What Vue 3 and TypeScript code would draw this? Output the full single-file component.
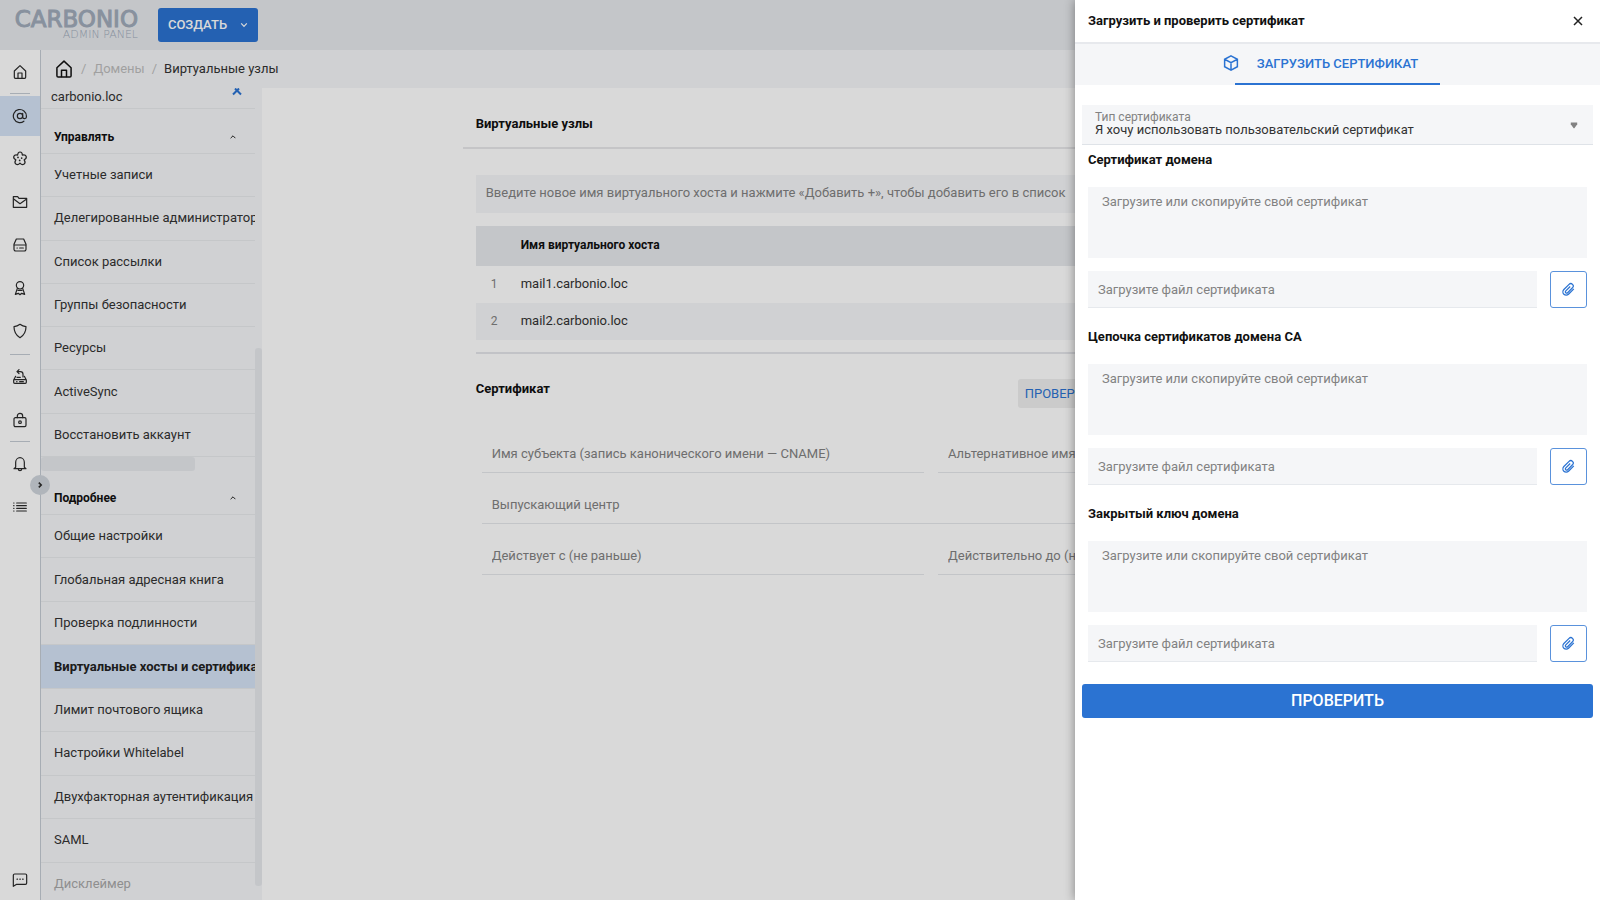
<script setup lang="ts">
import { ref } from 'vue'

interface NavItem {
  name: string
  label: string
  active?: boolean
}

interface MenuItem {
  label: string
  active?: boolean
  muted?: boolean
}

const icons: Record<string, string> = {
  home: '<path d="M3.500 10.500 12 2.500l8.500 8V20a1.500 1.500 0 0 1-1.500 1.500H5A1.500 1.500 0 0 1 3.500 20z"/><path d="M9 21v-7.500h6V21"/>',
  at: '<circle cx="12" cy="12" r="4"/><path d="M16 8v5.500a2.800 2.800 0 0 0 5.600-.5v-1a9.800 9.800 0 1 0-3.800 7.800"/>',
  cluster:
    '<path d="M8.500 6.100C8.500 3.400 10 1.500 12 1.500s3.500 1.900 3.500 4.600c2.600-.8 4.900-.1 5.700 1.900.8 2.100-.6 4.200-3 5.200 1.600 2.200 1.700 4.800 0 6.200-1.800 1.400-4.400.8-6.200-1.300-1.800 2.100-4.400 2.700-6.200 1.300-1.700-1.400-1.600-4 0-6.200-2.400-1-3.800-3.100-3-5.200.8-2 3.100-2.700 5.700-1.900z"/><path d="M9 9.500v.1M14.500 10.500v.1M11.500 14v.1" stroke-width="2.600"/>',
  mail: '<path d="M2 4h6.500l2 2.500H22V20H2z"/><path d="m2.500 7.500 9.500 7 9.500-6.500"/>',
  server:
    '<path d="M6.500 3h11l3.500 8v7.500a2.500 2.500 0 0 1-2.500 2.500h-13A2.500 2.500 0 0 1 3 18.500V11z"/><path d="M3.500 12h17M7.500 16.500h.5M11.500 16.500H17"/>',
  award:
    '<circle cx="12" cy="8" r="5.500"/><path d="M8 12.500 5 21.500l4.500-1.500L12 22l2.500-2 4.500 1.500-3-9M9 15.500h6"/>',
  shield: '<path d="M12 2c2.700 2 5.500 3.200 9 3.500 0 7.500-2.500 12.500-9 16.500C5.500 18 3 13 3 5.500 6.500 5.200 9.300 4 12 2z"/>',
  backup:
    '<path d="M5.500 11 2.500 16.500V20A1.500 1.500 0 0 0 4 21.500h16a1.500 1.500 0 0 0 1.500-1.500v-3.500l-3-5.500M3 16h18M7 19h.5M11.500 19H17M7.500 12.500h5"/><path d="M8 4h4.500a4 4 0 0 1 4 4v4M10.500 1 7.500 4l3 3"/>',
  lock: '<rect x="3" y="8.500" width="18" height="13.500" rx="2"/><path d="M8 8.500V6a4 4 0 0 1 8 0v2.500"/><circle cx="12" cy="15.200" r="2"/>',
  bell: '<path d="M5.500 17V9.500a6.500 7 0 0 1 13 0V17l2.500 2H3z"/><path d="M9.500 19.500a2.500 2.500 0 0 0 5 0"/>',
  list: '<path d="M7 6h14.500M7 10h14.500M7 14h14.500M7 18h14.500M2.500 6h.5M2.500 10h.5M2.500 14h.5M2.500 18h.5"/>',
  chat: '<path d="M4 3h16a2 2 0 0 1 2 2v11.500a2 2 0 0 1-2 2H7L2 21.500V5a2 2 0 0 1 2-2z"/><path d="M7.500 10.800h.8M11.700 10.800h.8M15.900 10.800h.8"/>',
}

const railGroups: NavItem[][] = [
  [{ name: 'home', label: 'Главная' }],
  [
    { name: 'at', label: 'Домены', active: true },
    { name: 'cluster', label: 'Серверы' },
    { name: 'mail', label: 'Хранилище' },
    { name: 'server', label: 'Почтовые серверы' },
    { name: 'award', label: 'Подписка' },
    { name: 'shield', label: 'Конфиденциальность' },
  ],
  [
    { name: 'backup', label: 'Резервные копии' },
    { name: 'lock', label: 'Безопасность' },
  ],
  [
    { name: 'bell', label: 'Уведомления' },
    { name: 'list', label: 'Операции' },
  ],
]

const manageItems: MenuItem[] = [
  { label: 'Учетные записи' },
  { label: 'Делегированные администраторы' },
  { label: 'Список рассылки' },
  { label: 'Группы безопасности' },
  { label: 'Ресурсы' },
  { label: 'ActiveSync' },
  { label: 'Восстановить аккаунт' },
]

const detailItems: MenuItem[] = [
  { label: 'Общие настройки' },
  { label: 'Глобальная адресная книга' },
  { label: 'Проверка подлинности' },
  { label: 'Виртуальные хосты и сертификаты', active: true },
  { label: 'Лимит почтового ящика' },
  { label: 'Настройки Whitelabel' },
  { label: 'Двухфакторная аутентификация' },
  { label: 'SAML' },
  { label: 'Дисклеймер', muted: true },
]

const hosts = ['mail1.carbonio.loc', 'mail2.carbonio.loc']

const certFields = [
  { id: 'subject', label: 'Имя субъекта (запись канонического имени — CNAME)' },
  { id: 'san', label: 'Альтернативное имя субъекта' },
  { id: 'issuer', label: 'Выпускающий центр', wide: true },
  { id: 'from', label: 'Действует с (не раньше)' },
  { id: 'until', label: 'Действительно до (не позже)' },
]

const uploads = ref([
  { id: 'domain', title: 'Сертификат домена', body: '', file: '' },
  { id: 'chain', title: 'Цепочка сертификатов домена CA', body: '', file: '' },
  { id: 'key', title: 'Закрытый ключ домена', body: '', file: '' },
])

const certType = ref('custom')
</script>

<template>
  <div class="app">
    <header class="topbar">
      <div class="logo">
        <span class="logo-name">CARBONIO</span>
        <span class="logo-sub">ADMIN PANEL</span>
      </div>
      <button class="create" type="button">
        СОЗДАТЬ
        <svg viewBox="0 0 10 10" width="8" height="8"><path d="M1.500 3 5 6.800 8.500 3" /></svg>
      </button>
    </header>

    <div class="body">
      <nav class="rail" aria-label="Разделы">
        <ul v-for="(group, g) in railGroups" :key="g" class="rail-group">
          <li v-for="item in group" :key="item.name">
            <button class="rail-item" :class="{ active: item.active }" type="button" :aria-label="item.label">
              <svg class="icon" viewBox="0 0 24 24" width="16" height="16" v-html="icons[item.name]"></svg>
            </button>
          </li>
        </ul>
        <button class="rail-item rail-last" type="button" aria-label="Обратная связь">
          <svg class="icon" viewBox="0 0 24 24" width="16" height="16" v-html="icons.chat"></svg>
        </button>
        <button class="expander" type="button" aria-label="Развернуть">
          <svg viewBox="0 0 10 10" width="8" height="8"><path d="M3.500 2 6.500 5 3.500 8" /></svg>
        </button>
      </nav>

      <div class="workspace">
        <div class="crumbs">
          <svg class="icon" viewBox="0 0 24 24" width="20" height="20" v-html="icons.home"></svg>
          <span class="sep">/</span>
          <a class="crumb" href="#domains">Домены</a>
          <span class="sep">/</span>
          <span>Виртуальные узлы</span>
        </div>

        <div class="columns">
          <aside class="side">
            <div class="side-list">
              <div class="domain">
                <span>carbonio.loc</span>
                <svg viewBox="0 0 10 8" width="10" height="8"><path d="M1 6.500 5 2.500 9 6.500M3 .5 5 2.500 7 .5" /></svg>
              </div>
              <button class="section first" type="button">
                Управлять
                <svg viewBox="0 0 10 10" width="6" height="6"><path d="M1 7 5 3l4 4" /></svg>
              </button>
              <ul class="menu manage">
                <li v-for="item in manageItems" :key="item.label">
                  <a href="#menu">{{ item.label }}</a>
                </li>
              </ul>
              <div class="hscroll"></div>
              <button class="section second" type="button">
                Подробнее
                <svg viewBox="0 0 10 10" width="6" height="6"><path d="M1 7 5 3l4 4" /></svg>
              </button>
              <ul class="menu detail">
                <li v-for="item in detailItems" :key="item.label" :class="{ active: item.active, muted: item.muted }">
                  <a href="#menu">{{ item.label }}</a>
                </li>
              </ul>
            </div>
            <div class="vscroll"><span class="thumb"></span></div>
          </aside>

          <main class="main">
            <div class="panel">
              <h1 class="panel-title">Виртуальные узлы</h1>
              <div class="panel-body">
                <input
                  class="host-input"
                  type="text"
                  aria-label="Имя виртуального хоста"
                  placeholder="Введите новое имя виртуального хоста и нажмите «Добавить +», чтобы добавить его в список"
                />
                <table class="hosts">
                  <thead>
                    <tr>
                      <th class="num"></th>
                      <th>Имя виртуального хоста</th>
                    </tr>
                  </thead>
                  <tbody>
                    <tr v-for="(host, i) in hosts" :key="host">
                      <td class="num">{{ i + 1 }}</td>
                      <td>{{ host }}</td>
                    </tr>
                  </tbody>
                </table>
                <section class="cert">
                  <div class="cert-head">
                    <h2>Сертификат</h2>
                    <button class="verify" type="button">ПРОВЕРИТЬ</button>
                  </div>
                  <div class="cert-grid">
                    <input
                      v-for="field in certFields"
                      :key="field.id"
                      class="cert-field"
                      :class="{ wide: field.wide }"
                      type="text"
                      readonly
                      :aria-label="field.label"
                      :placeholder="field.label"
                    />
                  </div>
                </section>
              </div>
            </div>
          </main>
        </div>
      </div>
    </div>

    <div class="shade"></div>

    <section class="drawer" role="dialog" aria-labelledby="drawer-title">
      <div class="drawer-head">
        <h2 id="drawer-title">Загрузить и проверить сертификат</h2>
        <button class="close" type="button" aria-label="Закрыть">
          <svg viewBox="0 0 10 10" width="10" height="10"><path d="M1 1l8 8M9 1 1 9" /></svg>
        </button>
      </div>
      <div class="tabs">
        <button class="tab" type="button">
          <svg viewBox="0 0 24 24" width="18" height="18">
            <path d="M12 2.500 20.500 7v10L12 21.500 3.500 17V7zM3.500 7l8.500 4.500L20.500 7M12 11.500v10" />
          </svg>
          ЗАГРУЗИТЬ СЕРТИФИКАТ
        </button>
      </div>
      <form class="drawer-body" @submit.prevent>
        <div class="select-box">
          <label for="cert-type">Тип сертификата</label>
          <select id="cert-type" v-model="certType">
            <option value="custom">Я хочу использовать пользовательский сертификат</option>
          </select>
          <svg class="caret" viewBox="0 0 10 10" width="8" height="8"><path d="M1 2h8v2L5.500 9h-1L1 4z" /></svg>
        </div>
        <fieldset v-for="item in uploads" :key="item.id" class="upload">
          <legend>{{ item.title }}</legend>
          <textarea v-model="item.body" :aria-label="item.title" placeholder="Загрузите или скопируйте свой сертификат"></textarea>
          <div class="file-row">
            <input v-model="item.file" type="text" :aria-label="item.title + ': файл'" placeholder="Загрузите файл сертификата" />
            <button class="attach" type="button" aria-label="Прикрепить файл">
              <svg viewBox="0 0 24 24" width="15" height="15">
                <path
                  d="M20.500 11 12 19.500a5.200 5.200 0 0 1-7.400-7.400l8.300-8.300a3.900 3.900 0 0 1 5.500 0 3.900 3.900 0 0 1 0 5.500l-7.800 7.800a2 2 0 0 1-2.900-2.900l7-7"
                />
              </svg>
            </button>
          </div>
        </fieldset>
        <button class="submit" type="submit">ПРОВЕРИТЬ</button>
      </form>
    </section>
  </div>
</template>

<style>
body {
  background: #ffffff;
}
</style>

<style scoped>
.app {
  position: relative;
  display: flex;
  flex-direction: column;
  height: 100vh;
  overflow: hidden;
  font-family: Roboto, "Liberation Sans", sans-serif;
  font-size: 13px;
  line-height: 20px;
  color: #333333;
  background: #ffffff;
}

.app * {
  box-sizing: border-box;
}

button,
input,
select,
textarea {
  margin: 0;
  padding: 0;
  border: 0;
  border-radius: 0;
  background: none;
  font: inherit;
  color: inherit;
}

ul {
  margin: 0;
  padding: 0;
  list-style: none;
}

h1,
h2 {
  margin: 0;
  font-size: 13px;
  font-weight: 700;
  line-height: 20px;
  color: #111111;
}

a {
  color: inherit;
  text-decoration: none;
}

svg {
  flex: none;
  fill: none;
  stroke: currentColor;
  stroke-width: 2;
}

.icon {
  stroke-width: 1.8;
  stroke-linejoin: round;
  stroke-linecap: round;
}

.topbar {
  display: flex;
  align-items: center;
  flex: 0 0 50px;
  gap: 20px;
  padding: 0 13px;
  background: #e7e9ed;
}

.logo {
  display: flex;
  flex-direction: column;
  align-items: flex-end;
  width: 125px;
  font-family: "DejaVu Sans", sans-serif;
  color: #a0abba;
}

.logo-name {
  font-size: 23px;
  line-height: 20px;
  -webkit-text-stroke: 1px currentColor;
}

.logo-sub {
  font-size: 11px;
  font-weight: 200;
  line-height: 12px;
}

.create {
  display: flex;
  align-items: center;
  justify-content: center;
  gap: 13px;
  width: 100px;
  height: 34px;
  border-radius: 3px;
  background: #2b73d2;
  color: #ffffff;
  font-weight: 500;
}

.create svg {
  stroke-width: 1.5;
}

.body {
  display: flex;
  flex: 1;
  min-height: 0;
}

.rail {
  position: relative;
  z-index: 2;
  display: flex;
  flex-direction: column;
  flex: 0 0 41px;
  border-right: 1px solid #c5ccd4;
  color: #2b2b2b;
}

.rail-group {
  display: flex;
  flex-direction: column;
  gap: 3px;
  padding-bottom: 1px;
}

.rail-group:first-child {
  padding-top: 2px;
}

.rail-group:nth-child(2) {
  padding-bottom: 3px;
}

.rail-group + .rail-group::before {
  content: "";
  align-self: center;
  width: 20px;
  height: 1px;
  margin-bottom: -1px;
  background: #c5ccd4;
}

.rail-item {
  display: flex;
  align-items: center;
  justify-content: center;
  width: 100%;
  height: 40px;
}

.rail-item.active {
  background: #d5e3f6;
}

.rail-last {
  margin-top: auto;
}

.expander {
  position: absolute;
  top: 425px;
  right: -10px;
  display: flex;
  align-items: center;
  justify-content: center;
  width: 20px;
  height: 20px;
  border-radius: 50%;
  background: #cfd5dc;
}

.workspace {
  display: flex;
  flex-direction: column;
  flex: 1;
  min-width: 0;
}

.crumbs {
  display: flex;
  align-items: center;
  flex: 0 0 38px;
  gap: 7px;
  padding: 0 13px;
  background: #f5f6f8;
  color: #333333;
}

.crumbs .icon {
  color: #111111;
}

.sep,
.crumb {
  color: #bdbdbd;
}

.columns {
  display: flex;
  flex: 1;
  min-height: 0;
}

.side {
  display: flex;
  flex: 0 0 221px;
  overflow: hidden;
  background: #f5f6f8;
}

.side-list {
  flex: 1;
  min-width: 0;
}

.domain {
  display: flex;
  justify-content: space-between;
  height: 21px;
  padding: 0 13px 0 10px;
  border-bottom: 1px solid #e8eaed;
  line-height: 18px;
}

.domain svg {
  color: #2b73d2;
}

.section {
  display: flex;
  align-items: center;
  justify-content: space-between;
  width: 100%;
  padding: 0 19px 0 13px;
  border-bottom: 1px solid #e8eaed;
  font-size: 12px;
  font-weight: 700;
  color: #111111;
}

.section svg {
  stroke-width: 1.5;
}

.section.first {
  height: 45px;
  padding-top: 12px;
}

.section.second {
  height: 44px;
  padding-top: 11px;
}

.menu {
  display: grid;
  grid-auto-rows: 1fr;
}

.menu li {
  display: flex;
  align-items: center;
  min-width: 0;
  padding-left: 13px;
  overflow: hidden;
  border-bottom: 1px solid #e8eaed;
  white-space: nowrap;
}

.manage {
  height: 303px;
}

.detail {
  height: 391px;
}

.menu .active {
  background: #d5e3f6;
  font-weight: 700;
  color: #222222;
}

.menu .muted {
  color: #a8a8a8;
}

.hscroll {
  width: 72%;
  height: 14px;
  border-radius: 3px;
  background: #e7e9ed;
}

.vscroll {
  flex: 0 0 7px;
  padding: 260px 0 14px;
}

.thumb {
  display: block;
  height: 100%;
  border-radius: 3px;
  background: #e7e9ed;
}

.main {
  flex: 1;
  min-width: 0;
}

.panel {
  width: 70%;
  margin: 0 auto;
}

.panel-title {
  padding: 26px 13px 13px;
  border-bottom: 2px solid #e8e8ea;
}

.panel-body {
  padding: 26px 13px 0;
}

.host-input {
  display: block;
  width: 100%;
  height: 38px;
  padding: 0 10px 3px;
  background: #f5f6f8;
}

input::placeholder,
textarea::placeholder {
  color: #828282;
  opacity: 1;
}

.hosts {
  width: 100%;
  margin-top: 13px;
  border-collapse: collapse;
  text-align: left;
}

.hosts th {
  height: 40px;
  padding: 0 0 2px;
  background: #e7e9ed;
  font-size: 12px;
  font-weight: 700;
  color: #111111;
}

.hosts td {
  height: 37px;
  padding: 0 0 2px;
}

.hosts .num {
  width: 45px;
  padding-left: 15px;
  font-size: 12px;
  color: #828282;
}

.hosts tbody tr:nth-child(even) {
  background: #f5f6f8;
}

.cert {
  margin-top: 12px;
  padding-top: 25px;
  border-top: 2px solid #e4e6ea;
}

.cert-head {
  display: flex;
}

.cert-head h2 {
  flex: 0 0 542px;
}

.verify {
  height: 29px;
  padding: 0 7px;
  border-radius: 3px;
  background: #efefef;
  color: #2b73d2;
}

.cert-grid {
  display: grid;
  grid-template-columns: 1fr 1fr;
  gap: 14px;
  padding: 28px 6px 0;
}

.cert-field {
  height: 37px;
  min-width: 0;
  padding: 0 10px 1px;
  border-bottom: 1px solid #e6e8eb;
}

.wide {
  grid-column: 1 / -1;
}

.shade {
  position: absolute;
  z-index: 3;
  inset: 0;
  background: rgba(0, 0, 0, 0.15);
}

.drawer {
  position: absolute;
  z-index: 4;
  top: 0;
  right: 0;
  bottom: 0;
  width: 525px;
  background: #ffffff;
  box-shadow: 0 0 10px rgba(0, 0, 0, 0.4);
}

.drawer-head {
  display: flex;
  align-items: center;
  justify-content: space-between;
  height: 44px;
  padding: 0 17px 0 13px;
  border-bottom: 2px solid #e7e9ed;
}

.close {
  display: flex;
  color: #222222;
}

.close svg {
  stroke-width: 1.5;
}

.tabs {
  display: flex;
  justify-content: center;
  background: #f5f6f8;
}

.tab {
  position: relative;
  width: 205px;
  height: 41px;
  border-bottom: 2px solid #2b73d2;
  color: #2b73d2;
  font-weight: 500;
  white-space: nowrap;
}

.tab svg {
  position: absolute;
  top: 10px;
  left: -13px;
}

.drawer-body {
  padding: 20px 7px;
}

.select-box {
  position: relative;
  height: 40px;
  padding: 7px 13px 0;
  border-bottom: 1px solid #dfe3e8;
  background: #f5f6f8;
}

.select-box label {
  display: block;
  font-size: 12px;
  line-height: 11px;
  color: #828282;
}

.select-box select {
  display: block;
  width: 100%;
  height: 14px;
  appearance: none;
  line-height: 14px;
}

.caret {
  position: absolute;
  top: 16px;
  right: 15px;
  fill: #828282;
  stroke: none;
}

.upload {
  margin: 0;
  padding: 0 6px;
  border: 0;
}

.upload + .upload {
  margin-top: 14px;
}

.upload legend {
  padding: 5px 0 0;
  font-weight: 700;
  color: #111111;
}

.upload textarea {
  display: block;
  width: 100%;
  height: 71px;
  margin-top: 17px;
  padding: 5px 14px;
  resize: none;
  background: #f5f6f8;
}

.file-row {
  display: flex;
  gap: 13px;
  margin-top: 13px;
}

.file-row input {
  flex: 1;
  min-width: 0;
  height: 37px;
  padding: 0 10px;
  border-bottom: 1px solid #e6e9ed;
  background: #f5f6f8;
}

.attach {
  display: flex;
  align-items: center;
  justify-content: center;
  width: 37px;
  height: 37px;
  border: 1px solid #5a92dc;
  border-radius: 3px;
  color: #2b73d2;
}

.submit {
  display: block;
  width: 100%;
  height: 34px;
  margin-top: 22px;
  border-radius: 3px;
  background: #2b73d2;
  color: #ffffff;
  font-size: 16px;
  font-weight: 500;
}
</style>
